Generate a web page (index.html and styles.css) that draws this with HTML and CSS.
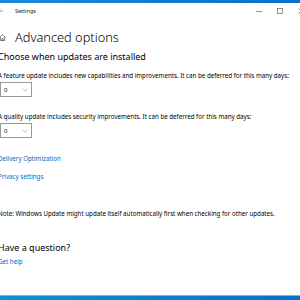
FILE: index.html
```html
<!DOCTYPE html>
<html lang="en">

<head>
    <meta charset="UTF-8">
    <title>Settings</title>
    <link rel="stylesheet" href="styles.css">
</head>

<body>
    <div class="accent-bar"></div>

    <!--* title bar -->
    <div class="titlebar">
        <div class="title-left">
            <svg class="back" width="6" height="6" viewBox="0 0 6 6">
                <path d="M0.5 3H6M3 0.5L0.5 3L3 5.5" fill="none" stroke="#555" stroke-width="0.6" />
            </svg>
            <span class="title">Settings</span>
        </div>
        <div class="window-controls">
            <svg width="6" height="6" viewBox="0 0 6 6">
                <path d="M0 3.5H6" stroke="#444" stroke-width="0.6" />
            </svg>
            <svg width="6" height="6" viewBox="0 0 6 6">
                <rect x="0.5" y="0.5" width="5" height="5" fill="none" stroke="#444" stroke-width="0.6" />
            </svg>
            <svg width="6" height="6" viewBox="0 0 6 6">
                <path d="M0.5 0.5L5.5 5.5M5.5 0.5L0.5 5.5" stroke="#444" stroke-width="0.6" />
            </svg>
        </div>
    </div>

    <div class="content">
        <div class="page-title">
            <svg class="home" width="7" height="7" viewBox="0 0 7 7">
                <path d="M0.5 3.5L3.5 0.7L6.5 3.5M1.3 2.8V6.5H5.7V2.8M2.8 6.5V4.5H4.2V6.5" fill="none" stroke="#333" stroke-width="0.6" />
            </svg>
            <h1>Advanced options</h1>
        </div>

        <h2>Choose when updates are installed</h2>

        <p class="label">A feature update includes new capabilities and improvements. It can be deferred for this many days:</p>
        <div class="select">
            <span>0</span>
            <svg width="6" height="4" viewBox="0 0 6 4">
                <path d="M0.5 0.8L3 3.2L5.5 0.8" fill="none" stroke="#777" stroke-width="0.5" />
            </svg>
        </div>

        <p class="label">A quality update includes security improvements. It can be deferred for this many days:</p>
        <div class="select">
            <span>0</span>
            <svg width="6" height="4" viewBox="0 0 6 4">
                <path d="M0.5 0.8L3 3.2L5.5 0.8" fill="none" stroke="#777" stroke-width="0.5" />
            </svg>
        </div>

        <div class="links">
            <a href="#" class="link">Delivery Optimization</a>
            <a href="#" class="link">Privacy settings</a>
        </div>

        <p class="note">Note: Windows Update might update itself automatically first when checking for other updates.</p>

        <h2 class="question">Have a question?</h2>
        <a href="#" class="link">Get help</a>
    </div>

    <div class="taskbar"></div>
</body>

</html>
```

FILE: styles.css
```css
body {
    margin: 0;
    width: 300px;
    height: 300px;
    overflow: hidden;
    background: #fff;
    font-family: "Noto Sans", "Open Sans", sans-serif;
    color: #000;
    display: flex;
    flex-direction: column;
}

.accent-bar {
    height: 3px;
    background: linear-gradient(90deg, #1c8ad8, #0b6fc9);
}

.titlebar {
    height: 16px;
    display: flex;
    justify-content: space-between;
    align-items: center;
}

.title-left {
    display: flex;
    align-items: center;
    gap: 12px;
    margin-left: -3px;
}

.title {
    font-size: 5.5px;
    color: #222;
}

.window-controls {
    display: flex;
    align-items: center;
    gap: 15px;
    margin-right: -4px;
}

.content {
    flex: 1;
    margin-left: -2px;
    display: flex;
    flex-direction: column;
    align-items: flex-start;
}

.page-title {
    display: flex;
    align-items: center;
    gap: 9px;
    margin-top: 10px;
    margin-left: 1px;
}

h1 {
    margin: 0;
    font-size: 12.8px;
    font-weight: 300;
    line-height: 16px;
}

h2 {
    margin: 6px 0 0;
    font-size: 9px;
    font-weight: 400;
    line-height: 12px;
}

.label {
    margin: 9px 0 0;
    font-size: 6.2px;
    line-height: 8px;
}

.select {
    margin-top: 2px;
    margin-left: 2px;
    width: 24px;
    height: 13px;
    border: 1px solid #999;
    display: flex;
    align-items: center;
    justify-content: space-between;
    padding: 0 3px;
    box-sizing: content-box;
    font-size: 6px;
    margin-bottom: 7px;
}

.links {
    display: flex;
    flex-direction: column;
    gap: 10px;
    margin-top: 10px;
}

.link {
    font-size: 6.2px;
    line-height: 8px;
    color: #0067c0;
    text-decoration: none;
}

.note {
    margin: 29px 0 0;
    font-size: 6.2px;
    line-height: 8px;
}

.question {
    margin-top: 24px;
    margin-bottom: 4px;
}

.taskbar {
    height: 4px;
    background: linear-gradient(90deg, #0a92d6, #0b6fc9);
    border-top: 1px solid #9ab;
}
```
